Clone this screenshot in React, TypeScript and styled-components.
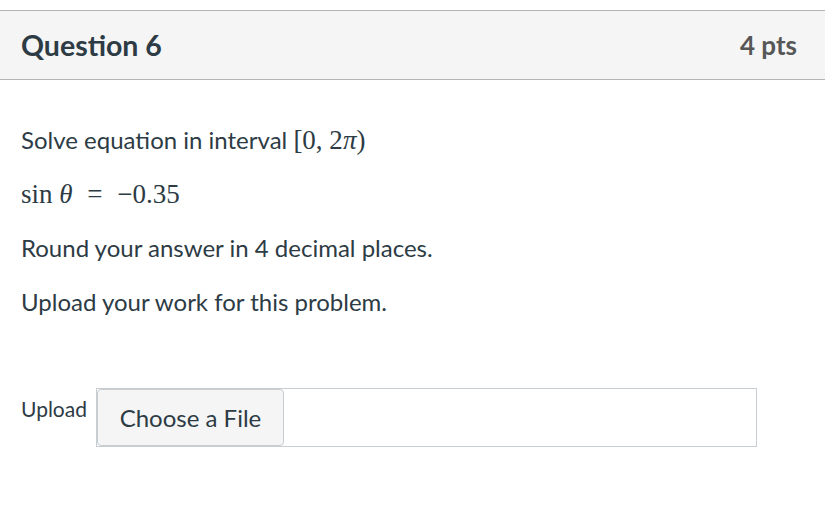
import React from 'react';
import styled, { createGlobalStyle } from 'styled-components';

const GlobalStyle = createGlobalStyle`
  html, body {
    margin: 0;
    padding: 0;
    background: #ffffff;
  }
  body {
    font-family: Lato, "Helvetica Neue", Arial, sans-serif;
    color: #2d3b45;
  }
`;

const App: React.FC = () => {
  return (
    <>
      <GlobalStyle />
      <QuestionWrapper>
        <QuestionHeader>
          <QuestionTitle>Question 6</QuestionTitle>
          <Points>4 pts</Points>
        </QuestionHeader>
        <QuestionBody>
          <Paragraph>
            Solve equation in interval <MathText>[0, 2<Italic>π</Italic>)</MathText>
          </Paragraph>
          <Paragraph>
            <MathText>
              sin <Italic>θ</Italic> <Op>=</Op> −0.35
            </MathText>
          </Paragraph>
          <Paragraph>Round your answer in 4 decimal places.</Paragraph>
          <Paragraph>Upload your work for this problem.</Paragraph>
        </QuestionBody>
        <UploadRow>
          <UploadLabel>Upload</UploadLabel>
          <FileInput>
            <ChooseButton type="button">Choose a File</ChooseButton>
          </FileInput>
        </UploadRow>
      </QuestionWrapper>
    </>
  );
};

const QuestionWrapper = styled.div`
  padding-top: 10px;
`;

const QuestionHeader = styled.div`
  display: flex;
  align-items: center;
  justify-content: space-between;
  height: 68px;
  padding: 0 28px 0 21px;
  background: #f5f5f5;
  border-top: 1px solid #b4b4b4;
  border-bottom: 1px solid #b4b4b4;
`;

const QuestionTitle = styled.h2`
  margin: 0;
  font-size: 28.5px;
  font-weight: 700;
  color: #2d3b45;
`;

const Points = styled.span`
  font-size: 26px;
  font-weight: 700;
  color: #575757;
`;

const QuestionBody = styled.div`
  padding: 42px 21px 0;
`;

const Paragraph = styled.p`
  margin: 0 0 18px;
  font-size: 24px;
  line-height: 36px;
  color: #2d3b45;
`;

const MathText = styled.span`
  font-family: "Liberation Serif", "DejaVu Serif", serif;
  font-size: 27px;
  color: #2d3b45;
`;

const Italic = styled.i`
  font-style: italic;
`;

const Op = styled.span`
  padding: 0 8px;
`;

const UploadRow = styled.div`
  display: flex;
  align-items: flex-start;
  gap: 9px;
  padding: 50px 21px 0;
`;

const UploadLabel = styled.span`
  font-size: 21px;
  line-height: 24px;
  padding-top: 9px;
  color: #2d3b45;
`;

const FileInput = styled.div`
  width: 661px;
  height: 59px;
  border: 1px solid #c7cdd1;
  box-sizing: border-box;
  display: flex;
`;

const ChooseButton = styled.button`
  height: 57px;
  width: 187px;
  background: #f5f5f5;
  border: 1px solid #c7cdd1;
  border-radius: 4px;
  margin: 0;
  font-family: Lato, Arial, sans-serif;
  font-size: 24px;
  color: #2d3b45;
  cursor: pointer;
`;

export default App;
